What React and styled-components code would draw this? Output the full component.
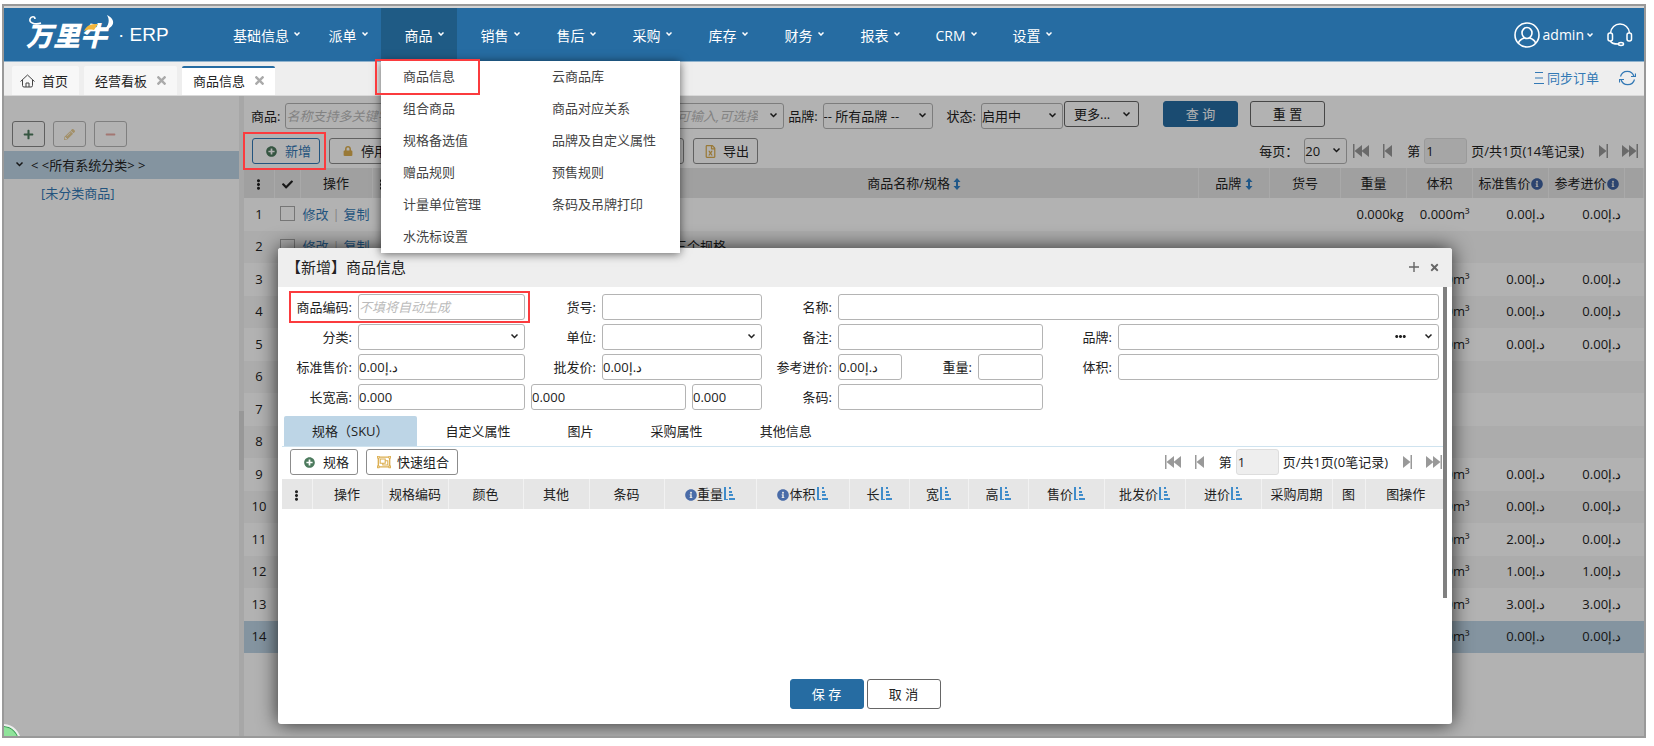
import React from 'react'
import styled, { createGlobalStyle, css } from 'styled-components'
import {
    FaCheck,
    FaEllipsisV,
    FaInfoCircle,
    FaLock,
    FaMinus,
    FaPencilAlt,
    FaPlus,
    FaPlusCircle,
    FaRegFileExcel,
    FaRegObjectGroup,
    FaTimes,
} from 'react-icons/fa'

const color = {
    primary: '#266ca2',
    primaryDark: '#1f5b85',
    link: '#3379b5',
    selected: '#bdd5e6',
    tableHead: '#e6e6e6',
    border: '#b4b4b4',
    green: '#4c7a5d',
    gold: '#dcae4f',
    red: '#fb3b3e',
    text: '#222',
}

const menuItems = [
    ['商品信息', '云商品库'],
    ['组合商品', '商品对应关系'],
    ['规格备选值', '品牌及自定义属性'],
    ['赠品规则', '预售规则'],
    ['计量单位管理', '条码及吊牌打印'],
    ['水洗标设置'],
]

const navBefore = ['基础信息', '派单']
const navAfter = ['销售', '售后', '采购', '库存', '财务', '报表', 'CRM', '设置']

const price = (value) => `د.إ${value}`

const products = [
    { editable: true, weight: '0.000kg', volume: '0.000m³', sale: '0.00', cost: '0.00' },
    { editable: true, name: '三个规格' },
    { volume: '0.000m³', sale: '0.00', cost: '0.00' },
    { volume: '0.000m³', sale: '0.00', cost: '0.00' },
    { volume: '0.000m³', sale: '0.00', cost: '0.00' },
    {},
    {},
    {},
    { volume: '0.000m³', sale: '0.00', cost: '0.00' },
    { volume: '0.000m³', sale: '0.00', cost: '0.00' },
    { volume: '0.000m³', sale: '2.00', cost: '0.00' },
    { volume: '0.000m³', sale: '1.00', cost: '1.00' },
    { volume: '0.000m³', sale: '3.00', cost: '3.00' },
    { volume: '0.000m³', sale: '0.00', cost: '0.00', selected: true },
]

const skuColumns = [
    { title: '操作', width: 70 },
    { title: '规格编码', width: 66 },
    { title: '颜色', width: 75 },
    { title: '其他', width: 66 },
    { title: '条码', width: 75 },
    { title: '重量', width: 92, info: true, sort: true },
    { title: '体积', width: 93, info: true, sort: true },
    { title: '长', width: 60, sort: true },
    { title: '宽', width: 59, sort: true },
    { title: '高', width: 60, sort: true },
    { title: '售价', width: 76, sort: true },
    { title: '批发价', width: 81, sort: true },
    { title: '进价', width: 76, sort: true },
    { title: '采购周期', width: 71 },
    { title: '图', width: 33 },
    { title: '图操作' },
]

/* icons */

const Chevron = () => (
    <svg className="chevron" width="9" height="9" viewBox="0 0 9 9" fill="none" stroke="currentColor" strokeWidth="1.5" aria-hidden="true">
        <path d="M1.500 2.500 4.500 5.500 7.500 2.500" />
    </svg>
)

const Caret = () => (
    <svg width="6" height="4" viewBox="0 0 6 4" fill="none" stroke="currentColor" strokeWidth="1.5" aria-hidden="true">
        <path d="M.5.5 3 3 5.500.5" />
    </svg>
)

const SortBars = () => (
    <svg width="12" height="14" viewBox="0 0 12 14" fill="#3f8ccb" aria-hidden="true">
        <path d="M1 0h2v12h2v1H1z" />
        <path d="M6 0h2v2H6zM6 4h3v2H6zM6 7h4v2H6zM6 11h6v2H6z" />
    </svg>
)

const UpDown = () => (
    <svg width="8" height="12" viewBox="0 0 8 12" fill="#2f7fc4" aria-hidden="true">
        <path d="M4 0 7.500 4H5v4h2.500L4 12 .5 8H3V4H.5z" />
    </svg>
)

const HomeIcon = () => (
    <svg width="15" height="14" viewBox="0 0 15 14" fill="none" stroke="#444" strokeWidth="1" aria-hidden="true">
        <path d="M.5 7.500 7.500 1l7 6.500M2.500 6v5.500q0 1.500 1.500 1.500h7q1.500 0 1.500-1.500V6M6 13V9h3v4" />
    </svg>
)

const UserIcon = () => (
    <svg width="26" height="26" viewBox="0 0 26 26" fill="none" stroke="#fff" strokeWidth="1.6" aria-hidden="true">
        <circle cx="13" cy="13" r="12" />
        <ellipse cx="13" cy="11" rx="5" ry="5.500" />
        <path d="M4.500 21c.8-3.200 3-4 6-5M21.500 21c-.8-3.200-3-4-6-5" />
    </svg>
)

const HeadsetIcon = () => (
    <svg width="26" height="24" viewBox="0 0 26 24" fill="none" stroke="#fff" strokeWidth="1.5" aria-hidden="true">
        <path d="M3.500 10C4 4.500 8 1 13 1s9 3.500 9.500 9" />
        <rect x="1" y="10" width="4.500" height="8" rx="2" />
        <rect x="20" y="10" width="4.500" height="8" rx="2" />
        <path d="M3.500 18c.5 2.500 4 3 8 3" />
        <ellipse cx="14" cy="21" rx="2.500" ry="1.500" />
    </svg>
)

const RefreshIcon = () => (
    <svg width="17" height="16" viewBox="0 0 17 16" fill="none" stroke={color.link} strokeWidth="1.2" aria-hidden="true">
        <path d="M1.500 6.500A7 7 0 0 1 15 6.500M15.500 9.500A7 7 0 0 1 2 9.500" />
        <path d="M12 6.500h4.500v-3M5 9.500H.5v3" />
    </svg>
)

const LinesIcon = () => (
    <svg width="10" height="12" viewBox="0 0 10 12" stroke={color.link} aria-hidden="true">
        <path d="M1 .5h8M1 6h8M0 11.500h10" />
    </svg>
)

const PageArrow = ({ double, flip }) => (
    <svg width={double ? 16 : 10} height="14" viewBox={double ? '0 0 16 14' : '0 0 10 14'} fill="#999" aria-hidden="true">
        <g transform={flip ? `translate(${double ? 16 : 10} 0) scale(-1 1)` : undefined}>
            <path d="M0 0h1.500v14H0z" />
            <path d="M1.500 7 9 1v12z" />
            {double && <path d="M8.500 7l7.500-6v12z" />}
        </g>
    </svg>
)

/* shared parts */

const Pager = ({ total, id }) => (
    <PagerWrapper>
        <IconButton aria-label="首页"><PageArrow double /></IconButton>
        <IconButton aria-label="上一页"><PageArrow /></IconButton>
        <div className="current">
            <label htmlFor={id}>第</label>
            <input id={id} defaultValue="1" />
            <span>页/共1页({total}笔记录)</span>
        </div>
        <IconButton aria-label="下一页"><PageArrow flip /></IconButton>
        <IconButton aria-label="末页"><PageArrow double flip /></IconButton>
    </PagerWrapper>
)

const Dropdown = ({ id, label, value = '', width }) => (
    <SelectBox $width={width}>
        <select id={id} aria-label={label} defaultValue={value}>
            <option>{value}</option>
        </select>
        <Chevron />
    </SelectBox>
)

const Header = () => (
    <HeaderWrapper>
        <Brand href="#home">
            <span className="mark">
                万里牛
                <svg width="92" height="32" viewBox="0 0 92 32" fill="none" aria-hidden="true">
                    <path d="M15 9C9 11 3 9 4 5c1-3 5-3 5 0" stroke="#fff" strokeWidth="1.600" />
                    <path d="M58 17c3-6 6-7 14-7l-4 6c-5-1-7 0-10 1z" fill="#f2b63c" />
                    <path d="M81 1c10 5 7 13-3 15 5-5 6-10 3-15z" fill="#fff" />
                </svg>
            </span>
            <span className="product">· ERP</span>
        </Brand>
        <Nav>
            {navBefore.map((item) => (
                <NavItem key={item} href="#nav">{item}<Caret /></NavItem>
            ))}
            <NavGroup>
                <NavItem href="#goods" $active>商品<Caret /></NavItem>
                <Menu>
                    {menuItems.flat().map((item, index) => (
                        <MenuItem key={item} href="#menu" $marked={index === 0}>{item}</MenuItem>
                    ))}
                </Menu>
            </NavGroup>
            {navAfter.map((item) => (
                <NavItem key={item} href="#nav">{item}<Caret /></NavItem>
            ))}
        </Nav>
        <UserArea>
            <button className="user"><UserIcon />admin<Caret /></button>
            <IconButton aria-label="客服"><HeadsetIcon /></IconButton>
        </UserArea>
    </HeaderWrapper>
)

const TabBar = () => (
    <TabBarWrapper>
        <PageTab><HomeIcon />首页</PageTab>
        <PageTab $closable>经营看板<FaTimes className="close" /></PageTab>
        <PageTab $closable $active>商品信息<FaTimes className="close" /></PageTab>
        <div className="sync">
            <a href="#sync"><LinesIcon />同步订单</a>
            <IconButton aria-label="刷新"><RefreshIcon /></IconButton>
        </div>
    </TabBarWrapper>
)

const Sidebar = () => (
    <SidebarWrapper>
        <div className="tools">
            <ToolButton aria-label="新增分类"><FaPlus color={color.green} /></ToolButton>
            <ToolButton aria-label="编辑分类" disabled><FaPencilAlt color={color.gold} /></ToolButton>
            <ToolButton aria-label="删除分类" disabled><FaMinus color="#dd7468" /></ToolButton>
        </div>
        <a className="root" href="#all"><Chevron />&lt; &lt;所有系统分类&gt; &gt;</a>
        <a className="leaf" href="#none">[未分类商品]</a>
    </SidebarWrapper>
)

const Filters = () => (
    <FiltersWrapper>
        <label htmlFor="keyword">商品:</label>
        <TextInput id="keyword" $width={214} placeholder="名称支持多关键字" />
        <SelectBox className="supplier" $width={200}>
            <TextInput aria-label="供应商" placeholder="可输入,可选择" />
            <Chevron />
        </SelectBox>
        <label htmlFor="brand">品牌:</label>
        <Dropdown id="brand" value="-- 所有品牌 --" width={110} />
        <label className="status" htmlFor="status">状态:</label>
        <Dropdown id="status" value="启用中" width={82} />
        <div className="actions">
            <Button className="more">更多...<Chevron /></Button>
            <Button $primary>查 询</Button>
            <Button>重 置</Button>
        </div>
    </FiltersWrapper>
)

const ProductTable = () => (
    <DataTable>
        <colgroup>
            <col width="30" />
            <col width="26" />
            <col width="72" />
            <col width="258" />
            <col />
            <col width="71" />
            <col width="71" />
            <col width="66" />
            <col width="66" />
            <col width="76" />
            <col width="76" />
            <col width="19" />
        </colgroup>
        <thead>
            <tr>
                <th><FaEllipsisV size="11" /></th>
                <th><FaCheck size="11" /></th>
                <th>操作</th>
                <th className="dots"><FaEllipsisV size="11" /></th>
                <th>商品名称/规格 <UpDown /></th>
                <th>品牌 <UpDown /></th>
                <th>货号</th>
                <th>重量</th>
                <th>体积</th>
                <th>标准售价<FaInfoCircle color="#3f62a0" size="12" /></th>
                <th>参考进价<FaInfoCircle color="#3f62a0" size="12" /></th>
                <th />
            </tr>
        </thead>
        <tbody>
            {products.map((row, index) => (
                <ProductRow key={index} $selected={row.selected}>
                    <td>{index + 1}</td>
                    <td><input type="checkbox" aria-label={`选择第${index + 1}行`} /></td>
                    <td className="links">
                        {row.editable && <><a href="#edit">修改</a><i>|</i><a href="#copy">复制</a></>}
                    </td>
                    <td />
                    <td className="name">{row.name}</td>
                    <td />
                    <td />
                    <td className="number">{row.weight}</td>
                    <td className="number">{row.volume}</td>
                    <td className="number">{row.sale && price(row.sale)}</td>
                    <td className="number">{row.cost && price(row.cost)}</td>
                    <td />
                </ProductRow>
            ))}
        </tbody>
    </DataTable>
)

const ProductList = () => (
    <ListWrapper>
        <Filters />
        <Toolbar>
            <Marked $inset="-6px -6px -6px -9px">
                <OutlineButton $focused><FaPlusCircle color={color.green} size="11" />新增</OutlineButton>
            </Marked>
            <OutlineButton><FaLock color={color.gold} size="10" />停用</OutlineButton>
            <OutlineButton className="last"><FaLock color={color.gold} size="10" />启用</OutlineButton>
            <OutlineButton $tight><FaRegFileExcel color={color.gold} size="13" />导出</OutlineButton>
            <div className="pages">
                <label htmlFor="pageSize">每页：</label>
                <Dropdown id="pageSize" value="20" width={43} />
                <Pager id="page" total={14} />
            </div>
        </Toolbar>
        <ProductTable />
    </ListWrapper>
)

const ProductForm = () => (
    <FormGrid>
        <Marked className="code" $inset="-3px -5px -3px -2px">
            <label htmlFor="code">商品编码:</label>
            <TextInput id="code" placeholder="不填将自动生成" />
        </Marked>
        <label htmlFor="itemNo">货号:</label>
        <TextInput id="itemNo" />
        <label htmlFor="name">名称:</label>
        <TextInput className="wide" id="name" />

        <label htmlFor="category">分类:</label>
        <Dropdown id="category" />
        <label htmlFor="unit">单位:</label>
        <Dropdown id="unit" />
        <label htmlFor="remark">备注:</label>
        <TextInput id="remark" />
        <label htmlFor="formBrand">品牌:</label>
        <SelectBox>
            <TextInput id="formBrand" />
            <FaEllipsisV className="more" size="11" />
            <Chevron />
        </SelectBox>

        <label htmlFor="salePrice">标准售价:</label>
        <TextInput id="salePrice" defaultValue={price('0.00')} />
        <label htmlFor="wholesale">批发价:</label>
        <TextInput id="wholesale" defaultValue={price('0.00')} />
        <label htmlFor="costPrice">参考进价:</label>
        <div className="pair">
            <TextInput id="costPrice" defaultValue={price('0.00')} />
            <label htmlFor="weight">重量:</label>
            <TextInput id="weight" />
        </div>
        <label htmlFor="volume">体积:</label>
        <TextInput id="volume" />

        <label htmlFor="length">长宽高:</label>
        <TextInput id="length" defaultValue="0.000" />
        <div className="sizes">
            <TextInput aria-label="宽" defaultValue="0.000" />
            <TextInput aria-label="高" defaultValue="0.000" />
        </div>
        <label htmlFor="barcode">条码:</label>
        <TextInput id="barcode" />
    </FormGrid>
)

const ProductDialog = () => (
    <DialogWrapper role="dialog" aria-labelledby="dialogTitle">
        <DialogHeader>
            <h2 id="dialogTitle">【新增】商品信息</h2>
            <IconButton aria-label="最大化">
                <svg width="10" height="10" viewBox="0 0 10 10" stroke="#666" strokeWidth="1.4" aria-hidden="true">
                    <path d="M5 0v10M0 5h10" />
                </svg>
            </IconButton>
            <IconButton aria-label="关闭"><FaTimes color="#666" size="11" /></IconButton>
        </DialogHeader>
        <DialogBody>
            <ProductForm />
            <FormTabs>
                <FormTab $active>规格（SKU）</FormTab>
                <FormTab>自定义属性</FormTab>
                <FormTab>图片</FormTab>
                <FormTab>采购属性</FormTab>
                <FormTab>其他信息</FormTab>
            </FormTabs>
            <SkuToolbar>
                <OutlineButton><FaPlusCircle color={color.green} size="11" />规格</OutlineButton>
                <OutlineButton $tight><FaRegObjectGroup color={color.gold} size="14" />快速组合</OutlineButton>
                <div className="pages"><Pager id="skuPage" total={0} /></div>
            </SkuToolbar>
            <div className="sku">
                <DataTable>
                    <colgroup>
                        <col width="30" />
                        {skuColumns.map((column) => <col key={column.title} width={column.width} />)}
                    </colgroup>
                    <thead>
                        <tr>
                            <th><FaEllipsisV size="11" /></th>
                            {skuColumns.map((column) => (
                                <th key={column.title}>
                                    {column.info && <FaInfoCircle color="#4a6ca8" size="12" />}
                                    {column.title}
                                    {column.sort && <SortBars />}
                                </th>
                            ))}
                        </tr>
                    </thead>
                </DataTable>
            </div>
            <ScrollThumb />
        </DialogBody>
        <DialogFooter>
            <Button $primary $tall>保 存</Button>
            <Button $tall>取 消</Button>
        </DialogFooter>
    </DialogWrapper>
)

const App = () => {
    return (
        <Frame>
            <GlobalStyle />
            <Header />
            <TabBar />
            <Workspace>
                <Sidebar />
                <Splitter />
                <ProductList />
                <Backdrop />
                <ProductDialog />
            </Workspace>
            <HelpBubble />
        </Frame>
    )
}

const GlobalStyle = createGlobalStyle`
    *{
        box-sizing: border-box;
    }

    body{
        margin: 0;
        background: #fff;
        color: ${color.text};
        font-family: 'Open Sans', 'Noto Sans CJK SC', sans-serif;
        font-size: 13px;
        line-height: 20px;
    }

    button, input, select{
        font: inherit;
        color: inherit;
    }

    button{
        cursor: pointer;
    }

    a{
        color: inherit;
        text-decoration: none;
    }

    svg{
        flex: none;
    }
`

const Frame = styled.div`
    position: relative;
    display: flex;
    flex-direction: column;
    min-height: calc(100vh - 12px);
    margin: 4px 8px 8px 2px;
    border: 2px solid #999;
    overflow: hidden;
`

const HeaderWrapper = styled.header`
    display: flex;
    height: 56px;
    border-top: 2px solid #d4d4d4;
    border-bottom: 1px solid #8fb2cd;
    background: ${color.primary};
    color: #fff;
`

const Brand = styled.a`
    display: flex;
    align-items: center;
    width: 214px;
    padding-left: 22px;

    .mark{
        position: relative;
        padding-top: 2px;
        font-size: 27px;
        font-style: italic;
        font-weight: 900;
        line-height: 34px;

        svg{
            position: absolute;
            top: -3px;
            left: 0;
        }
    }

    .product{
        margin-left: 11px;
        font-family: 'Liberation Sans', sans-serif;
        font-size: 19px;
    }
`

const Nav = styled.nav`
    display: flex;
    font-size: 14px;
`

const NavGroup = styled.div`
    position: relative;
    display: flex;
`

const NavItem = styled.a`
    display: flex;
    align-items: center;
    justify-content: center;
    gap: 5px;
    min-width: 76px;
    padding: 3px 5px 0 15px;
    background: ${(props) => (props.$active ? color.primaryDark : 'transparent')};
    white-space: nowrap;

    svg{
        margin-bottom: 4px;
    }
`

const redFrame = css`
    &::after{
        content: '';
        position: absolute;
        border: 2px solid ${color.red};
        pointer-events: none;
    }
`

const Menu = styled.div`
    position: absolute;
    z-index: 5;
    top: 100%;
    left: 0;
    display: grid;
    grid-template-columns: 149px 150px;
    background: #fff;
    box-shadow: 0 1px 9px rgba(0, 0, 0, 0.6);
    color: #444;
    font-size: 13px;
`

const MenuItem = styled.a`
    position: relative;
    padding: 5px 0 7px 22px;

    ${(props) => props.$marked && css`
        ${redFrame}

        &::after{
            inset: -2px 50px -2px -6px;
        }
    `}
`

const UserArea = styled.div`
    display: flex;
    align-items: center;
    gap: 14px;
    margin-left: auto;
    padding: 0 11px 0 0;
    font-size: 14px;

    .user{
        display: flex;
        align-items: center;
        gap: 3px;
        padding: 0;
        border: 0;
        background: none;
    }
`

const IconButton = styled.button`
    display: flex;
    padding: 0;
    border: 0;
    background: none;
`

const TabBarWrapper = styled.div`
    display: flex;
    align-items: flex-end;
    gap: 5px;
    height: 34px;
    padding-left: 8px;
    border-bottom: 1px solid #d9d9d9;
    background: #eee;

    .sync{
        display: flex;
        align-items: center;
        align-self: center;
        gap: 20px;
        margin-left: auto;
        padding: 0 8px 2px 0;
        color: ${color.link};

        a{
            display: flex;
            align-items: center;
            gap: 3px;
        }
    }
`

const PageTab = styled.button`
    display: flex;
    align-items: center;
    gap: ${(props) => (props.$closable ? 10 : 7)}px;
    height: 29px;
    padding: 0 11px 2px ${(props) => (props.$closable ? 11 : 8)}px;
    border: 0;
    border-top: 2px solid ${(props) => (props.$active ? color.primary : '#f7f7f7')};
    border-radius: 2px 2px 0 0;
    background: ${(props) => (props.$active ? '#fff' : '#f7f7f7')};

    .close{
        width: 9px;
        color: #aaa;
    }
`

const Workspace = styled.main`
    position: relative;
    display: flex;
    flex: 1;
`

const SidebarWrapper = styled.aside`
    width: 235px;
    flex: none;
    padding-top: 25px;

    .tools{
        display: flex;
        gap: 8px;
        padding: 0 8px 4px;
    }

    .root, .leaf{
        display: flex;
        align-items: center;
        height: 28px;
        padding-bottom: 1px;
    }

    .root{
        gap: 7px;
        padding-left: 11px;
        background: ${color.selected};
    }

    .leaf{
        padding-left: 37px;
        color: ${color.link};
    }
`

const ToolButton = styled.button`
    display: flex;
    align-items: center;
    justify-content: center;
    width: 33px;
    height: 26px;
    border: 1px solid #888;
    border-radius: 3px;
    background: none;
    font-size: 11px;

    &:disabled{
        opacity: 0.6;
    }
`

const Splitter = styled.div`
    display: flex;
    flex: none;
    width: 5px;
    background: #f0f0f0;

    &::before{
        content: '';
        width: 100%;
        height: 59px;
        margin-top: 315px;
        background: #dadada;
    }
`

const ListWrapper = styled.section`
    flex: 1;
    min-width: 0;
    padding-top: 5px;
`

const FiltersWrapper = styled.div`
    display: flex;
    align-items: flex-end;
    height: 28px;
    padding-left: 7px;
    white-space: nowrap;

    label{
        margin-right: 5px;
        line-height: 26px;
    }

    .supplier{
        margin: 0 4px 0 auto;

        input{
            padding-right: 25px;
            text-align: right;
        }
    }

    .status{
        margin-left: 14px;
    }

    .actions{
        display: flex;
        align-self: flex-start;
        gap: 12px;
        margin: 0 319px 0 1px;
    }

    .more{
        display: flex;
        align-items: center;
        justify-content: space-between;
        margin-right: 12px;
        padding: 0 7px 0 9px;
    }
`

const TextInput = styled.input`
    width: ${(props) => (props.$width ? `${props.$width}px` : '100%')};
    min-width: 0;
    height: 26px;
    padding: 0;
    border: 1px solid ${color.border};
    border-radius: 3px;
    background: #fff;

    &::placeholder{
        color: #bbb;
        font-style: italic;
    }
`

const SelectBox = styled.div`
    position: relative;
    width: ${(props) => (props.$width ? `${props.$width}px` : 'auto')};

    select{
        display: block;
        width: 100%;
        height: 26px;
        padding: 0;
        border: 1px solid ${color.border};
        border-radius: 3px;
        background: #fff;
        appearance: none;
    }

    .chevron{
        position: absolute;
        top: 8px;
        right: 6px;
    }

    .more{
        position: absolute;
        top: 7px;
        right: 33px;
        transform: rotate(90deg);
    }
`

const Button = styled.button`
    width: ${(props) => (props.$tall ? 74 : 75)}px;
    height: ${(props) => (props.$tall ? 30 : 26)}px;
    padding: 0;
    border: 1px solid ${(props) => (props.$primary ? color.primary : '#666')};
    border-radius: 3px;
    background: ${(props) => (props.$primary ? color.primary : '#fff')};
    color: ${(props) => (props.$primary ? '#fff' : color.text)};
`

const OutlineButton = styled.button`
    display: flex;
    align-items: center;
    gap: ${(props) => (props.$tight ? 6 : 8)}px;
    height: 26px;
    padding: 0 8px 0 ${(props) => (props.$tight ? 10 : 13)}px;
    border: 1px solid ${(props) => (props.$focused ? color.link : '#8c8c8c')};
    border-radius: 3px;
    background: #fff;
    color: ${(props) => (props.$focused ? color.link : color.text)};
    white-space: nowrap;
`

const Marked = styled.div`
    position: relative;
    ${redFrame}

    &::after{
        z-index: 3;
        inset: ${(props) => props.$inset};
    }
`

const Toolbar = styled.div`
    display: flex;
    align-items: center;
    gap: 9px;
    padding: 9px 6px 4px 8px;

    .last{
        margin-left: 212px;
    }

    .pages{
        display: flex;
        align-items: center;
        gap: 6px;
        margin-left: auto;
    }
`

const PagerWrapper = styled.div`
    display: flex;
    align-items: center;
    gap: 14px;
    white-space: nowrap;

    .current{
        display: flex;
        align-items: center;
        gap: 4px;
    }

    input{
        width: 43px;
        height: 26px;
        padding: 0 1px;
        border: 1px solid #ddd;
        border-radius: 3px;
        background: #eee;
    }
`

const DataTable = styled.table`
    width: 100%;
    border-collapse: collapse;
    table-layout: fixed;

    th{
        height: 30px;
        padding: 0 0 1px;
        border-right: 1px solid #f2f2f2;
        background: ${color.tableHead};
        font-weight: 400;
        white-space: nowrap;
    }

    th svg{
        vertical-align: -2px;
    }

    .dots{
        padding-left: 3px;
        text-align: left;
    }
`

const ProductRow = styled.tr`
    height: 33px;
    background: ${(props) => (props.$selected ? color.selected : '#fff')};

    &:nth-child(even){
        height: 32px;
        background: ${(props) => (props.$selected ? color.selected : '#f6f6f6')};
    }

    td{
        padding: 0 0 2px;
        text-align: center;
        white-space: nowrap;
    }

    input{
        display: block;
        width: 15px;
        height: 15px;
        margin: 0 auto;
        border: 1px solid #aaa;
        appearance: none;
    }

    .links{
        color: ${color.link};

        i{
            padding: 0 4px;
            color: #bbb;
            font-style: normal;
        }
    }

    .name{
        padding-left: 44px;
        text-align: left;
    }

    .number{
        padding-right: 3px;
        text-align: right;
    }
`

const Backdrop = styled.div`
    position: absolute;
    z-index: 1;
    inset: 0;
    background: rgba(0, 0, 0, 0.3);
`

const DialogWrapper = styled.section`
    position: absolute;
    z-index: 2;
    top: 152px;
    right: 192px;
    left: 274px;
    border-radius: 3px;
    background: #fff;
    box-shadow: 0 0 20px rgba(0, 0, 0, 0.75);
`

const DialogHeader = styled.div`
    display: flex;
    align-items: center;
    gap: 10px;
    height: 39px;
    padding: 0 12px 1px 8px;
    border-radius: 3px 3px 0 0;
    background: #eee;

    h2{
        flex: 1;
        margin: 0;
        font-size: 15px;
        font-weight: 400;
    }
`

const DialogBody = styled.div`
    position: relative;
    min-height: 392px;
    padding-top: 7px;

    .sku{
        padding: 0 5px 0 4px;
    }
`

const FormGrid = styled.div`
    display: grid;
    grid-template-columns: 80px 167px 77px 160px 76px 205px 75px 1fr;
    row-gap: 4px;
    padding-right: 13px;

    label{
        padding-right: 6px;
        line-height: 26px;
        text-align: right;
        white-space: nowrap;
    }

    .code{
        display: grid;
        grid-column: span 2;
        grid-template-columns: 67px 1fr;
        margin-left: 13px;
    }

    .wide{
        grid-column: span 3;
    }

    .pair{
        display: grid;
        grid-template-columns: 64px 76px 65px;
    }

    .sizes{
        display: grid;
        grid-column: span 2;
        grid-template-columns: 1fr 70px;
        gap: 6px;
        padding-left: 6px;
    }
`

const FormTabs = styled.div`
    display: flex;
    gap: 1px;
    margin: 6px 5px 0 4px;
    padding-left: 2px;
    border-bottom: 1px solid #cfe3ef;
`

const FormTab = styled.button`
    height: 30px;
    padding: 0 28px;
    border: 0;
    border-radius: 2px 2px 0 0;
    background: ${(props) => (props.$active ? color.selected : 'none')};
`

const SkuToolbar = styled.div`
    display: flex;
    align-items: center;
    gap: 8px;
    padding: 2px 10px 4px 12px;

    .pages{
        margin-left: auto;
    }
`

const ScrollThumb = styled.div`
    position: absolute;
    top: 0;
    right: 5px;
    width: 4px;
    height: 311px;
    background: #808080;
`

const DialogFooter = styled.div`
    display: flex;
    justify-content: center;
    gap: 3px;
    padding-bottom: 15px;
`

const HelpBubble = styled.div`
    position: absolute;
    z-index: 4;
    bottom: -24px;
    left: -19px;
    width: 36px;
    height: 36px;
    border: 2px solid #eee;
    border-radius: 50%;
    background: #8fe39a;
    box-shadow: inset 0 0 0 1px #3a9a55;
`

export default App
